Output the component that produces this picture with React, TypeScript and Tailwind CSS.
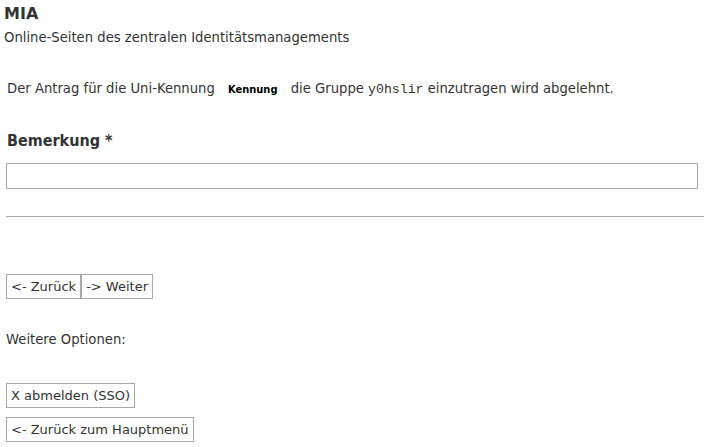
import React from "react";

export default function App() {
  const btn =
    "border border-[#a9a9a9] bg-white px-[4px] h-[25px] text-[13px] text-[#333] leading-none";
  return (
    <div className="min-h-[447px] bg-white text-[#333] text-[13.2px]" style={{ fontFamily: "'DejaVu Sans', Verdana, sans-serif" }}>
      <div className="pl-[4px] pt-[4px]">
        <div className="text-[16px] font-bold leading-[20px] text-[#333]">MIA</div>
        <div className="mt-[6px] leading-[16px]">Online-Seiten des zentralen Identitätsmanagements</div>
      </div>
      <div className="px-[6px]">
        <p className="mt-[35px] pl-[1px] leading-[16px]">
          Der Antrag für die Uni-Kennung{" "}
          <span className="mx-[9px] text-[11px] font-bold text-black" style={{ fontFamily: "'DejaVu Sans Condensed', 'DejaVu Sans', sans-serif" }}>Kennung</span>{" "}
          die Gruppe <span style={{ fontFamily: "'Liberation Mono', monospace" }}>y0hslir</span> einzutragen wird abgelehnt.
        </p>
        <h2 className="mt-[33px] pl-[1px] text-[16px] font-bold leading-[20px]" style={{ fontFamily: "'DejaVu Sans Condensed', 'DejaVu Sans', sans-serif" }}>Bemerkung *</h2>
        <input className="mt-[12px] block w-[692px] h-[26px] border border-[#a9a9a9] bg-white" />
        <hr className="mt-[27px] border-0 border-t border-[#a9a9a9] -mr-[6px]" />
        <div className="mt-[57px] flex">
          <button className={btn}>&lt;- Zurück</button>
          <button className={btn}>-&gt; Weiter</button>
        </div>
        <div className="mt-[33px] leading-[16px]">Weitere Optionen:</div>
        <div className="mt-[35px] flex flex-col items-start gap-[9px]">
          <button className={btn}>X abmelden (SSO)</button>
          <button className={btn}>&lt;- Zurück zum Hauptmenü</button>
        </div>
      </div>
    </div>
  );
}
